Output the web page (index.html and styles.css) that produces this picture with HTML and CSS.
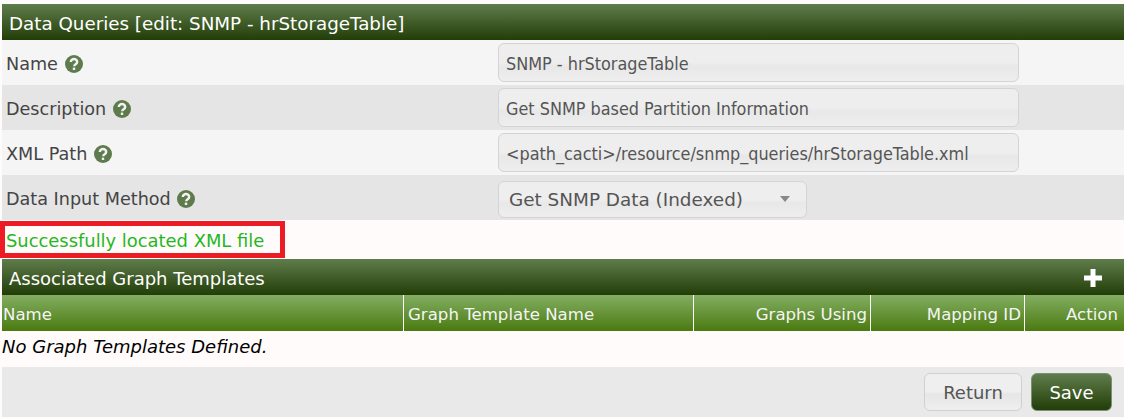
FILE: index.html
```html
<!DOCTYPE html>
<html lang="en">
<head>
<meta charset="utf-8">
<title>Data Queries</title>
<link rel="stylesheet" href="styles.css">
</head>
<body>
<div class="page">
  <div class="bar title">Data Queries [edit: SNMP - hrStorageTable]</div>
  <div class="row odd">
    <div class="label">Name <svg class="help" viewBox="0 0 18 18"><circle cx="9" cy="9" r="9"/><path d="M5.800 7a3.200 3 0 0 1 6.400 0c0 2.300-3 2.300-3 4.300"/><rect x="7.800" y="12.600" width="2.400" height="2.400"/></svg></div>
    <div class="field"><div class="input">SNMP - hrStorageTable</div></div>
  </div>
  <div class="row even">
    <div class="label">Description <svg class="help" viewBox="0 0 18 18"><circle cx="9" cy="9" r="9"/><path d="M5.800 7a3.200 3 0 0 1 6.400 0c0 2.300-3 2.300-3 4.300"/><rect x="7.800" y="12.600" width="2.400" height="2.400"/></svg></div>
    <div class="field"><div class="input">Get SNMP based Partition Information</div></div>
  </div>
  <div class="row odd">
    <div class="label">XML Path <svg class="help" viewBox="0 0 18 18"><circle cx="9" cy="9" r="9"/><path d="M5.800 7a3.200 3 0 0 1 6.400 0c0 2.300-3 2.300-3 4.300"/><rect x="7.800" y="12.600" width="2.400" height="2.400"/></svg></div>
    <div class="field"><div class="input">&lt;path_cacti&gt;/resource/snmp_queries/hrStorageTable.xml</div></div>
  </div>
  <div class="row even">
    <div class="label">Data Input Method <svg class="help" viewBox="0 0 18 18"><circle cx="9" cy="9" r="9"/><path d="M5.800 7a3.200 3 0 0 1 6.400 0c0 2.300-3 2.300-3 4.300"/><rect x="7.800" y="12.600" width="2.400" height="2.400"/></svg></div>
    <div class="field"><div class="select"><span>Get SNMP Data (Indexed)</span><i class="caret"></i></div></div>
  </div>
  <div class="message"><span class="ok">Successfully located XML file</span><div class="highlight"></div></div>
  <div class="bar bar-action"><span>Associated Graph Templates</span><svg class="plus" viewBox="0 0 18 18"><path d="M6.500 0h5v6.500H18v5h-6.500V18h-5v-6.500H0v-5h6.500z"/></svg></div>
  <div class="thead">
    <div class="th c1">Name</div>
    <div class="th c2">Graph Template Name</div>
    <div class="th c3">Graphs Using</div>
    <div class="th c4">Mapping ID</div>
    <div class="th c5">Action</div>
  </div>
  <div class="empty">No Graph Templates Defined.</div>
  <div class="actions">
    <div class="btn">Return</div>
    <div class="btn primary">Save</div>
  </div>
</div>
</body>
</html>
```
FILE: styles.css
```css
html, body { margin: 0; padding: 0; background: #fffbfa; }
body { font-family: "DejaVu Sans", Verdana, sans-serif; font-size: 17.6px; color: #444; }
.page { padding: 4px 0 0 2px; height: 415px; overflow: hidden; }
.bar {
  height: 36px; box-sizing: border-box; padding: 2px 0 0 7px; color: #fff; font-size: 18px;
  background: linear-gradient(#5f7d4c, #223d07);
  display: flex; justify-content: space-between; align-items: center;
}
.title { font-size: 18.3px; }
.row { height: 45px; display: flex; align-items: center; }
.odd { background: #f5f5f5; }
.even { background: #e5e5e5; }
.label { width: 496px; padding: 3px 0 0 4px; box-sizing: border-box; display: flex; align-items: center; white-space: pre; }
.help { width: 18px; height: 18px; flex: none; margin-left: 1px; }
.help circle { fill: #5e7b4d; }
.help path { fill: none; stroke: #f2f2f2; stroke-width: 2.4; }
.help rect { fill: #f2f2f2; }
.input, .select {
  box-sizing: border-box; border: 1px solid #d4d4d4; border-radius: 6px;
  background: linear-gradient(#eeeeee 50%, #e8e8e8 60%, #eeeeee);
  color: #555; height: 39px;
  display: flex; align-items: center;
}
.input { width: 521px; padding: 1px 0 0 7px; font-family: "DejaVu Sans Condensed", "DejaVu Sans", sans-serif; font-stretch: condensed; font-size: 17.85px; }
.select { width: 309px; height: 37px; margin-top: 3px; padding: 0 16px 0 10px; justify-content: space-between; font-size: 18.4px; }
.caret { width: 0; height: 0; border: 5px solid transparent; border-top: 6px solid #888; border-bottom: 0; }
.message { position: relative; height: 39px; line-height: 41px; padding-left: 4px; font-size: 17.9px; }
.ok { color: #1fb81f; }
.highlight { position: absolute; left: -2px; top: 1px; width: 285px; height: 37px; box-sizing: border-box; border: 5px solid #ed1c24; }
.plus { width: 18px; height: 18px; fill: #fff; margin-right: 22px; }
.thead {
  height: 36px; display: grid; grid-template-columns: 402px 290px 177px 154px 1fr;
  background: linear-gradient(#83ae62, #4a7a10); color: #f4f4f4; font-size: 16.6px;
}
.th { line-height: 39px; box-sizing: border-box; border-right: 1px solid #fff; padding: 0 3px 0 1px; }
.c2 { padding-left: 4px; }
.c3, .c4, .c5 { text-align: right; }
.c5 { border-right: 0; padding-right: 6px; }
.empty { height: 36px; line-height: 32px; font-style: italic; color: #000; font-size: 18px; }
.actions {
  height: 50px; background: #e9e9e9; display: flex; justify-content: flex-end; align-items: center;
  gap: 9px; padding-right: 12px; font-size: 18px;
}
.btn {
  width: 98px; height: 38px; box-sizing: border-box; border: 1px solid #d0d0d0; border-radius: 6px;
  display: flex; align-items: center; justify-content: center; color: #555;
  background: linear-gradient(#efefef 50%, #e6e6e6 55%, #efefef);
}
.primary { width: 81px; color: #fff; border-color: #7d8f72; background: linear-gradient(#5f7d4c, #223d07); }
```
